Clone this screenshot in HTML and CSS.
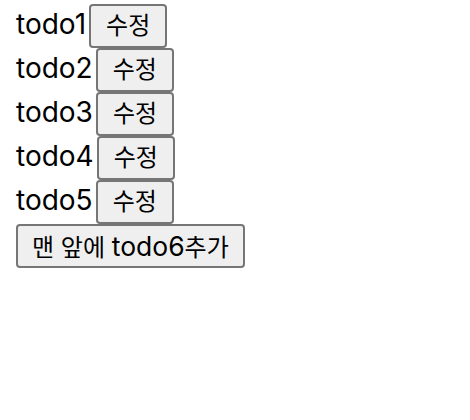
FILE: index.html
```html
<!DOCTYPE html>
<html lang="ko">
<head>
<meta charset="utf-8">
<link rel="stylesheet" href="styles.css">
</head>
<body>
<div class="list">
  <div class="row"><span class="label">todo1</span><button class="btn">수정</button></div>
  <div class="row"><span class="label">todo2</span><button class="btn">수정</button></div>
  <div class="row"><span class="label">todo3</span><button class="btn">수정</button></div>
  <div class="row"><span class="label">todo4</span><button class="btn">수정</button></div>
  <div class="row"><span class="label">todo5</span><button class="btn">수정</button></div>
</div>
<button class="btn add">맨 앞에 <span class="latin">todo6</span>추가</button>
</body>
</html>
```
FILE: styles.css
```css
html, body {
  background: #ffffff;
}
body {
  margin: 0;
  padding: 4px 16px;
  font-family: Inter, "Noto Sans CJK KR", sans-serif;
  color: #000;
}
.list {
  display: flex;
  flex-direction: column;
}
.row {
  display: flex;
  align-items: baseline;
  height: 44px;
}
.label {
  font-size: 28px;
  line-height: 1;
}
.btn {
  font-family: Inter, "Noto Sans CJK KR", sans-serif;
  font-size: 24px;
  height: 44px;
  padding: 0 15px;
  margin-left: 3px;
  background: #efefef;
  border: 2px solid #767676;
  border-radius: 4px;
  color: #000;
  line-height: 1;
}
.latin {
  font-size: 26.5px;
}
.add {
  display: block;
  margin-left: 0;
  padding: 0 14px;
}
```
